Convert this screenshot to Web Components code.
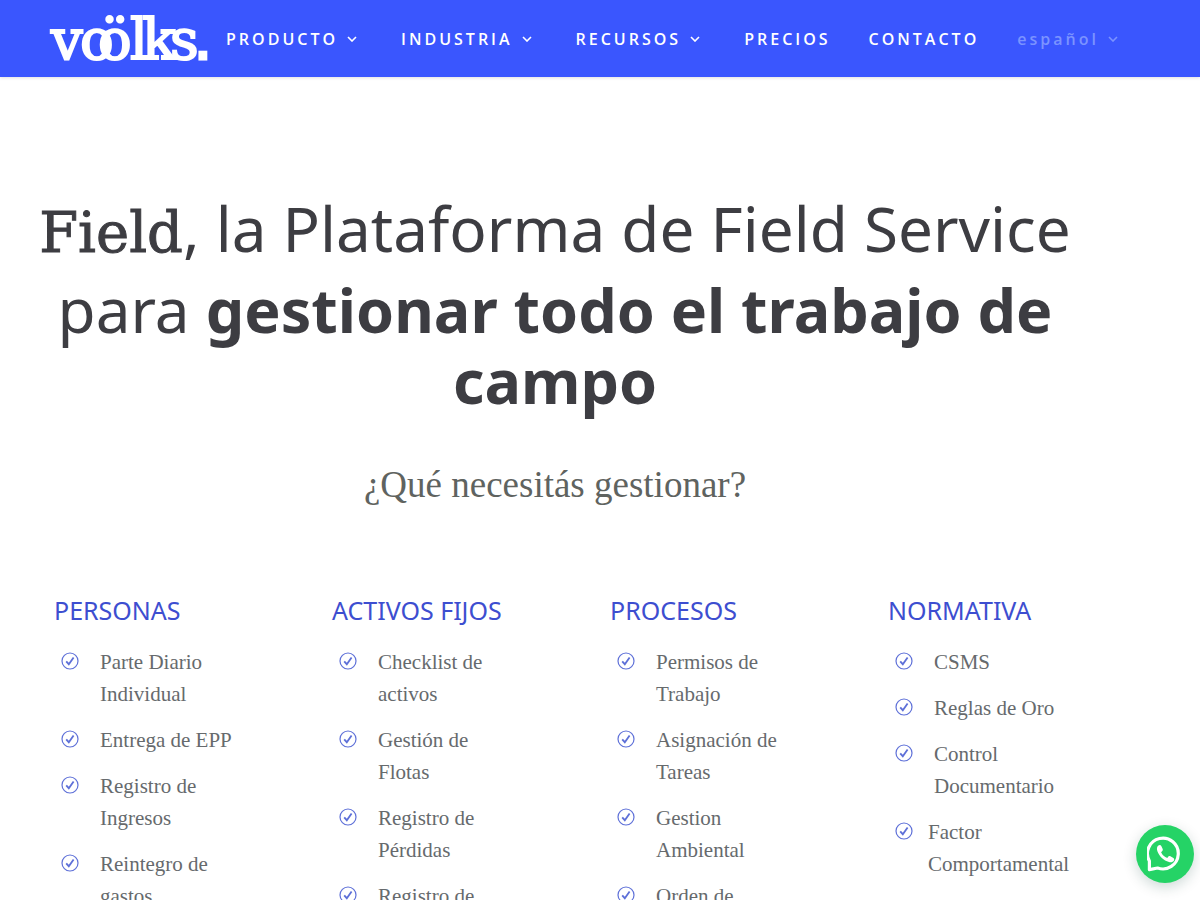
<!DOCTYPE html>
<html lang="es">
<head>
<meta charset="utf-8">
<meta name="viewport" content="width=device-width, initial-scale=1">
<title>Voölks Field</title>
<style>
  body {
    margin: 0;
    background: #fff;
    color: #666a6d;
    font-family: "Liberation Serif", serif;
    --brand: #3a56fe;
    --title: #3d4ed0;
    --dark: #3d3d42;
  }
</style>
</head>
<body>
<voolks-header>
  <nav-item href="#producto" menu>PRODUCTO</nav-item>
  <nav-item href="#industria" menu>INDUSTRIA</nav-item>
  <nav-item href="#recursos" menu>RECURSOS</nav-item>
  <nav-item href="#precios">PRECIOS</nav-item>
  <nav-item href="#contacto">CONTACTO</nav-item>
  <nav-item href="#idioma" menu muted>español</nav-item>
</voolks-header>

<main>
  <field-hero>
    <span slot="subtitle">¿Qué necesitás gestionar?</span>
  </field-hero>

  <feature-grid>
    <feature-column heading="PERSONAS">
      <feature-item>Parte Diario Individual</feature-item>
      <feature-item>Entrega de EPP</feature-item>
      <feature-item>Registro de Ingresos</feature-item>
      <feature-item>Reintegro de gastos</feature-item>
    </feature-column>
    <feature-column heading="ACTIVOS FIJOS">
      <feature-item>Checklist de activos</feature-item>
      <feature-item>Gestión de Flotas</feature-item>
      <feature-item>Registro de Pérdidas</feature-item>
      <feature-item>Registro de</feature-item>
    </feature-column>
    <feature-column heading="PROCESOS">
      <feature-item>Permisos de Trabajo</feature-item>
      <feature-item>Asignación de Tareas</feature-item>
      <feature-item>Gestion Ambiental</feature-item>
      <feature-item>Orden de</feature-item>
    </feature-column>
    <feature-column heading="NORMATIVA">
      <feature-item>CSMS</feature-item>
      <feature-item>Reglas de Oro</feature-item>
      <feature-item>Control Documentario</feature-item>
      <feature-item tight>Factor Comportamental</feature-item>
    </feature-column>
  </feature-grid>
</main>

<whatsapp-button></whatsapp-button>

<script>
class VoolksLogo extends HTMLElement {
  constructor() {
    super();
    this.attachShadow({ mode: "open" });
    // the letters of the wordmark interlock, so each one has its own x
    this.shadowRoot.innerHTML = `
      <style>
        :host { display: block; flex: none; }
        a, svg { display: block; }
        text {
          font-family: "DejaVu Serif", serif;
          font-size: 56px;
          fill: #fff;
          stroke: #fff;
          stroke-width: 2px;
        }
        .dot { font-family: "DejaVu Sans", sans-serif; stroke-width: 3px; }
      </style>
      <a href="#inicio" aria-label="voölks.">
        <svg width="160" height="56" viewBox="0 0 160 56">
          <text y="48" x="2 31 49 81 93 121 145">voölks<tspan class="dot">.</tspan></text>
        </svg>
      </a>
    `;
  }
}
customElements.define("voolks-logo", VoolksLogo);

class NavItem extends HTMLElement {
  constructor() {
    super();
    this.attachShadow({ mode: "open" });
    this.shadowRoot.innerHTML = `
      <style>
        :host { display: block; }
        :host([menu]) { margin-right: 6px; }
        a {
          display: flex;
          align-items: center;
          gap: 9px;
          color: #fff;
          font: 600 16px/24px "Open Sans", sans-serif;
          letter-spacing: 3px;
          text-decoration: none;
          white-space: nowrap;
        }
        :host([muted]) a { color: #7b93ff; }
        svg { display: none; }
        :host([menu]) svg { display: block; }
      </style>
      <a>
        <slot></slot>
        <svg width="10" height="6" viewBox="0 0 10 6" fill="none" stroke="currentColor" stroke-width="1.6">
          <path d="M1 1l4 4 4-4"/>
        </svg>
      </a>
    `;
  }

  connectedCallback() {
    this.shadowRoot.querySelector("a").href = this.getAttribute("href");
  }
}
customElements.define("nav-item", NavItem);

class VoolksHeader extends HTMLElement {
  constructor() {
    super();
    this.attachShadow({ mode: "open" });
    this.shadowRoot.innerHTML = `
      <style>
        :host { display: block; }
        header {
          display: flex;
          align-items: center;
          gap: 17px;
          height: 77px;
          padding: 0 49px;
          background: var(--brand);
          box-shadow: 0 1px 3px rgba(0, 0, 0, 0.12);
        }
        nav { display: flex; gap: 38px; }
      </style>
      <header>
        <voolks-logo></voolks-logo>
        <nav><slot></slot></nav>
      </header>
    `;
  }
}
customElements.define("voolks-header", VoolksHeader);

class FieldHero extends HTMLElement {
  constructor() {
    super();
    this.attachShadow({ mode: "open" });
    this.shadowRoot.innerHTML = `
      <style>
        :host {
          display: block;
          padding: 115px 120px 0 30px;
          text-align: center;
        }
        h1 {
          margin: 0;
          color: var(--dark);
          font: 400 62px/71px "Noto Sans", sans-serif;
        }
        b { font-size: 61px; }
        .brand {
          font-family: "DejaVu Serif", serif;
          font-size: 56px;
          line-height: 82px;
          -webkit-text-stroke: 1px currentColor;
        }
        h2 {
          margin: 47px 0 0;
          color: #5f6360;
          font-size: 37px;
          font-weight: 400;
          line-height: 44px;
        }
      </style>
      <h1><span class="brand">Field</span>, la Plataforma de Field Service para <b>gestionar todo el trabajo de campo</b></h1>
      <h2><slot name="subtitle"></slot></h2>
    `;
  }
}
customElements.define("field-hero", FieldHero);

class FeatureGrid extends HTMLElement {
  constructor() {
    super();
    this.attachShadow({ mode: "open" });
    this.shadowRoot.innerHTML = `
      <style>
        :host {
          display: grid;
          grid-template-columns: repeat(4, minmax(0, 1fr));
          gap: 86px;
          padding: 85px 120px 40px 54px;
        }
      </style>
      <slot></slot>
    `;
  }
}
customElements.define("feature-grid", FeatureGrid);

class FeatureColumn extends HTMLElement {
  constructor() {
    super();
    this.attachShadow({ mode: "open" });
    this.shadowRoot.innerHTML = `
      <style>
        :host { display: block; }
        h3 {
          margin: 0 0 18px;
          color: var(--title);
          font: 400 25px/36px "Noto Sans", sans-serif;
          white-space: nowrap;
        }
        div { display: flex; flex-direction: column; gap: 14px; }
      </style>
      <h3></h3>
      <div role="list"><slot></slot></div>
    `;
  }

  connectedCallback() {
    this.shadowRoot.querySelector("h3").textContent = this.getAttribute("heading");
  }
}
customElements.define("feature-column", FeatureColumn);

class FeatureItem extends HTMLElement {
  constructor() {
    super();
    this.attachShadow({ mode: "open" });
    this.shadowRoot.innerHTML = `
      <style>
        :host {
          display: flex;
          gap: 21px;
          padding-left: 7px;
          font-size: 21px;
          line-height: 32px;
        }
        :host([tight]) { gap: 15px; }
        svg { flex: none; margin-top: 6px; color: #5e70d8; }
      </style>
      <svg width="18" height="18" viewBox="0 0 18 18" fill="none" stroke="currentColor">
        <circle cx="9" cy="9" r="8" stroke-width="1.2"/>
        <path d="M5.2 9.4l2.6 2.8 4.8-6.8" stroke-width="1.8"/>
      </svg>
      <span><slot></slot></span>
    `;
  }

  connectedCallback() {
    this.setAttribute("role", "listitem");
  }
}
customElements.define("feature-item", FeatureItem);

class WhatsappButton extends HTMLElement {
  constructor() {
    super();
    this.attachShadow({ mode: "open" });
    this.shadowRoot.innerHTML = `
      <style>
        :host { position: fixed; right: 6px; bottom: 17px; }
        button {
          display: grid;
          place-items: center;
          width: 58px;
          height: 58px;
          padding: 0;
          border: 0;
          border-radius: 50%;
          background: #25d366;
          box-shadow: 0 4px 14px rgba(0, 60, 50, 0.2);
          cursor: pointer;
        }
      </style>
      <button type="button" aria-label="WhatsApp">
        <svg width="36" height="36" viewBox="0 0 36 36">
          <path d="M2.4 33.6V25A15.4 15.4 0 1 1 10.6 32z" fill="none" stroke="#fff" stroke-width="3.2" stroke-linejoin="round"/>
          <path d="M11.4 9.6c-1.6 1.2-1.8 3.4-1 5.6 1.8 5 6.2 9.2 11.6 10.8 2.2.6 4.2-.2 5-1.6.4-.8.2-1.8-.6-2.4l-3-1.8c-.8-.5-1.6-.3-2.1.4l-1 1.4c-2.8-1-5-3-6.2-5.8l1.2-1.2c.6-.6.7-1.3.4-2l-1.4-3c-.6-1.2-2-1.2-2.9-.4z" fill="#fff"/>
        </svg>
      </button>
    `;
  }
}
customElements.define("whatsapp-button", WhatsappButton);
</script>
</body>
</html>
